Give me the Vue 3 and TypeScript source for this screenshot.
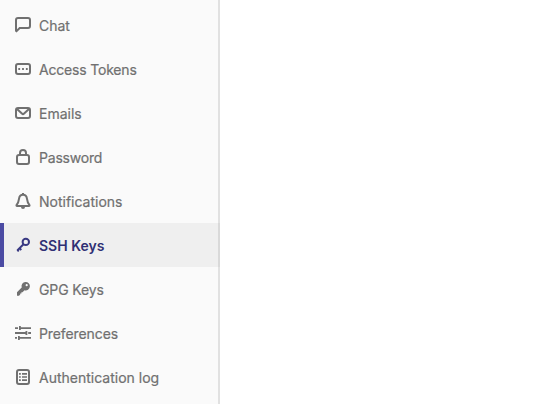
<script setup lang="ts">
interface NavItem {
  label: string
  icon: string
  tracking?: number
  active?: boolean
}

const items: NavItem[] = [
  { label: 'Chat', icon: 'comment' },
  { label: 'Access Tokens', icon: 'token', tracking: -0.19 },
  { label: 'Emails', icon: 'mail' },
  { label: 'Password', icon: 'lock', tracking: -0.2 },
  { label: 'Notifications', icon: 'bell' },
  { label: 'SSH Keys', icon: 'key', active: true },
  { label: 'GPG Keys', icon: 'key-solid', tracking: -0.12 },
  { label: 'Preferences', icon: 'sliders', tracking: -0.1 },
  { label: 'Authentication log', icon: 'log' },
]
</script>

<template>
  <div class="page">
    <nav class="sidebar">
      <ul class="list">
        <li v-for="item in items" :key="item.label">
          <a class="item" :class="{ active: item.active }">
            <svg class="icon" viewBox="0 0 16 16" aria-hidden="true">
              <path v-if="item.icon === 'comment'" class="line" d="M1 13.800V3a2 2 0 0 1 2-2h10a2 2 0 0 1 2 2v6a2 2 0 0 1-2 2H4.700L1.500 14.200Z" />
              <template v-else-if="item.icon === 'token'">
                <rect class="line" x="1" y="3" width="14" height="10" rx="2" />
                <path d="M3.300 7.100h1.800v1.800H3.300zM7.100 7.100h1.800v1.800H7.100zM10.900 7.100h1.800v1.800h-1.800z" />
              </template>
              <template v-else-if="item.icon === 'mail'">
                <rect class="line" x="1" y="3" width="14" height="10" rx="2" />
                <path class="line" d="M2 4l4.900 4.600a1.600 1.600 0 0 0 2.200 0L14 4" />
              </template>
              <template v-else-if="item.icon === 'lock'">
                <rect class="line" x="2" y="6" width="12" height="9" rx="2" />
                <path class="line" d="M5 6V4a3 3 0 0 1 6 0v2" />
              </template>
              <template v-else-if="item.icon === 'bell'">
                <path class="line" d="M8 1.700C5.600 1.700 4.300 3.300 4 5.800C3.600 9 2.900 10.400 1.500 12.200Q1.300 13 2 13H14Q14.700 13 14.500 12.200C13.100 10.400 12.400 9 12 5.800C11.700 3.300 10.400 1.700 8 1.700Z" />
                <path d="M7 0h2v2H7zM6 14h4a2 2 0 0 1-4 0z" />
              </template>
              <template v-else-if="item.icon === 'key'">
                <circle class="line" cx="10.800" cy="4.900" r="3.200" />
                <path class="line" d="M8.500 7.200L2.300 13.400M4.500 11.200l1.800 1.800M2.300 12.900l1.500 1.500" />
              </template>
              <path v-else-if="item.icon === 'key-solid'" fill-rule="evenodd" d="M6.700 6.400A4.200 4.200 0 1 1 9.500 9.200L7.500 11.200H6.400V12.400H5.200V13.600L4 14.800H2V11.300ZM12.800 4.200a1.100 1.100 0 1 0-2.200 0a1.100 1.100 0 1 0 2.200 0Z" />
              <path v-else-if="item.icon === 'sliders'" d="M0 2.200h3v1.700H0zM4 1h1.800v1.200H16v1.700H5.800V5H4zM0 7.100h10.500V6h1.800v4h-1.800V8.900H0zM13.200 7.100H16v1.800h-2.800zM0 12.100h2v1.700H0zM3 11h1.800v1.100H16v1.700H4.800V15H3z" />
              <template v-else>
                <rect class="line" x="2" y="1" width="12" height="14" rx="2" />
                <path d="M4 4.100h1.800v1.700H4zM7 4.100h5v1.700H7zM4 7.150h1.800v1.700H4zM7 7.150h5v1.700H7zM4 10.200h1.800v1.700H4zM7 10.200h5v1.700H7z" />
              </template>
            </svg>
            <span class="label" :style="{ letterSpacing: `${item.tracking ?? 0}px` }">{{ item.label }}</span>
          </a>
        </li>
      </ul>
    </nav>
    <main class="content"></main>
  </div>
</template>

<style>
body {
  margin: 0;
  background: #fff;
}
</style>

<style scoped>
.page {
  display: flex;
  height: 404px;
  overflow: hidden;
  font-family: Inter, "Liberation Sans", sans-serif;
}

.sidebar {
  box-sizing: border-box;
  width: 220px;
  padding-top: 3px;
  background: #fafafa;
  box-shadow: inset -2px 0 0 #e1e1e1;
}

.list {
  margin: 0;
  padding: 0;
  list-style: none;
}

.item {
  display: flex;
  align-items: center;
  gap: 8px;
  box-sizing: border-box;
  height: 44px;
  padding: 0 15px;
  color: #707070;
  font-size: 14px;
  line-height: 20px;
}

.item.active {
  background: #efefef;
  box-shadow: inset 4px 0 0 #4b4ba3, inset -2px 0 0 #d9d9d9;
  color: #2f2f74;
  font-weight: 600;
}

.icon {
  flex: none;
  width: 16px;
  height: 16px;
  fill: currentColor;
}

.active .icon {
  color: #393982;
}

.line {
  fill: none;
  stroke: currentColor;
  stroke-width: 2;
}

.label {
  padding-top: 2px;
  white-space: nowrap;
  -webkit-text-stroke: 0.2px currentColor;
}

.active .label {
  -webkit-text-stroke: 0;
}

.content {
  flex: 1;
}
</style>
